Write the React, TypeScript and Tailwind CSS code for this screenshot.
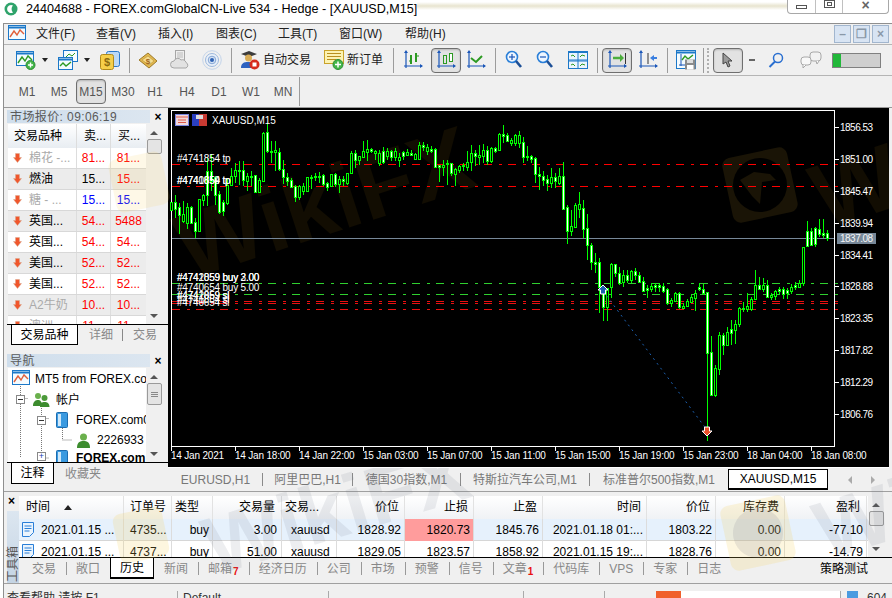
import * as React from "react";

type Candle = [number, number, number, number, number];

// hi, top, bottom, lo, fill (1 = white body) in 3x units from y=108
const upper: Candle[] = [
  [283,283,307,310,0],[260,283,303,330,1],[285,298,320,378,1],[278,318,340,345,0],[285,298,345,362,0],[295,298,345,345,1],
  [330,343,368,390,1],[272,274,368,368,0],[258,262,275,295,0],[150,190,262,295,1],[138,190,220,250,1],[205,208,260,290,1],
  [250,258,312,318,1],[275,283,310,325,1],[210,230,285,292,0],[180,205,230,235,0],[165,187,205,225,0],[160,186,190,230,0],
  [160,187,217,235,1],[195,205,218,250,0],[190,205,208,235,1],[200,202,252,255,1],[210,217,252,255,0],[72,74,218,222,0],
  [45,72,130,135,1],[100,128,130,165,1],[100,127,133,190,0],[120,133,183,190,1],[155,182,208,228,1],[195,208,220,235,1],
  [210,217,237,240,1],[230,234,268,282,1],[232,234,268,275,0],[225,235,250,262,0],[208,208,250,252,0],[200,208,210,242,0],
  [195,204,208,220,0],[192,204,206,225,0],[198,202,228,235,1],[222,226,238,248,1],[198,199,235,238,0],[195,199,228,238,1],
  [205,212,228,255,0],[205,212,220,235,1],[195,196,224,232,0],[128,135,196,198,0],[125,135,155,180,1],[143,145,156,170,0],
  [100,128,146,150,0],[95,124,132,160,0],[120,124,130,135,1],[125,128,135,155,0],[125,134,164,173,0],[118,128,163,168,1],
  [120,130,144,155,0],[125,128,146,160,1],[120,130,148,160,0],[135,146,155,178,0],[130,132,144,155,1],[122,132,140,145,0],
  [125,135,140,145,1],[135,138,153,157,0],[102,112,152,155,0],[102,112,116,130,1],[108,116,128,140,0],[115,124,128,135,1],
  [120,124,178,180,1],[170,172,176,222,1],[155,170,177,205,0],[155,165,166,230,1],[165,165,195,205,1],[180,183,198,235,0],
  [170,173,185,195,0],[165,170,175,190,1],[130,163,177,190,0],[110,136,163,190,0],[125,136,145,175,1],[110,141,146,170,0],
  [108,127,144,165,0],[115,127,158,170,1],[118,120,158,165,0],[118,121,128,135,1],[76,79,125,130,0],[52,78,84,105,1],
  [75,82,98,102,1],[90,97,105,115,0],[78,82,105,115,0],[70,82,105,120,0],
  [88,102,146,165,1],[115,144,148,160,1],[140,145,152,165,1],[148,150,197,225,1],[178,197,205,245,1],[190,205,215,235,1],
  [200,214,224,248,1],[180,208,224,240,0],[195,207,220,240,1],[180,205,225,232,0],[162,204,302,305,1],[290,298,368,408,1],
  [305,355,368,385,0],[285,291,356,358,0],[252,289,302,330,0],[275,300,362,390,1],[318,361,412,455,1],[405,411,463,485,1],
  [435,463,467,495,1],[450,463,538,614,1],
];

// same fields, 3x units from y=270
const lower: Candle[] = [
  [60,55,110,152,1],[55,55,110,152,0],[-20,-18,52,85,0],[-18,-18,10,20,1],[-10,10,40,45,1],[0,16,36,50,0],[0,15,30,40,1],
  [0,4,30,38,0],[-5,2,14,30,1],[5,14,36,40,1],[20,34,62,65,1],[45,55,60,85,1],[40,48,58,65,0],[40,46,50,65,1],[40,46,50,65,1],
  [40,48,62,70,1],[55,58,100,105,1],[85,90,99,112,0],[65,70,92,95,0],[65,68,112,118,1],[100,108,114,118,0],[88,92,108,112,0],
  [75,82,96,100,0],[60,70,84,122,0],[40,52,58,62,1],[42,58,68,75,1],[66,66,248,512,1],[198,246,374,374,1],[285,294,374,380,0],
  [185,196,296,315,0],[190,196,224,255,1],[170,186,224,225,0],[150,178,188,225,1],[150,163,180,222,0],[112,114,163,170,0],
  [95,114,118,125,1],[68,108,118,125,0],[80,86,118,122,0],[0,46,88,90,0],[20,46,56,60,1],[25,44,58,65,0],[30,46,80,85,1],
  [70,74,80,90,0],[60,64,78,90,0],[52,56,64,72,1],[52,58,72,88,1],[55,60,70,88,1],[42,50,62,72,0],[35,46,50,60,1],[30,38,50,55,0],
  [-68,-68,40,48,0],[-146,-116,-71,-68,1],[-126,-116,-76,-71,1],[-130,-126,-78,-70,1],[-153,-124,-109,-98,1],[-153,-111,-106,-96,1],
  [-121,-111,-96,-88,1],
];

const candles: Candle[] = [...upper, ...lower.map(([a, b, c, d, f]) => [a + 486, b + 486, c + 486, d + 486, f] as Candle)];
const py = (v: number) => 108 + Math.round(v / 3);

const prices = [
  ["1856.53", 127], ["1851.00", 159], ["1845.47", 191], ["1839.94", 223], ["1834.41", 255],
  ["1828.88", 286], ["1823.35", 318], ["1817.82", 350], ["1812.29", 382], ["1806.76", 414],
] as const;

const times = [
  "14 Jan 2021", "14 Jan 18:00", "14 Jan 22:00", "15 Jan 03:00", "15 Jan 07:00", "15 Jan 11:00",
  "15 Jan 15:00", "15 Jan 19:00", "15 Jan 23:00", "18 Jan 04:00", "18 Jan 08:00",
];

const levels = [
  [164, "#ff0000"], [186, "#ff0000"], [283, "#2fd02f"], [294, "#2fd02f"], [301, "#e81010"], [303, "#e81010"], [309, "#e81010"],
] as const;

// long and short dash of one 24px period along the level lines
const dashes = Array.from({ length: 28 }, (_, k) => 172 + k * 24).flatMap((x) => [[x, 8], [x + 15, 3]]);

const chartLabels = [
  ["#4741854 tp", 162], ["#4740654 tp", 184], ["#4741859 tp", 184], ["#4742059 buy 3.00", 281], ["#4741859 buy 2.00", 281],
  ["#4740654 buy 5.00", 291], ["#4741859 sl", 299], ["#4742059 sl", 299], ["#4741854 sl", 303], ["#4740654 sl", 306],
] as const;

const quotes = [
  ["棉花 -...", "81...", "81...", "text-[#aaaaaa]", "text-[#ff0000]", "text-[#ff0000]"],
  ["燃油", "15...", "15...", "text-black", "text-black", "text-[#ff0000]"],
  ["糖 - ...", "15...", "15...", "text-[#aaaaaa]", "text-[#0000ff]", "text-[#0000ff]"],
  ["英国...", "54...", "5488", "text-black", "text-[#ff0000]", "text-[#ff0000]"],
  ["英国...", "54...", "54...", "text-black", "text-[#ff0000]", "text-[#ff0000]"],
  ["美国...", "52...", "52...", "text-black", "text-[#ff0000]", "text-[#ff0000]"],
  ["美国...", "52...", "52...", "text-black", "text-[#ff0000]", "text-[#ff0000]"],
  ["A2牛奶", "10...", "10...", "text-[#aaaaaa]", "text-[#ff0000]", "text-[#ff0000]"],
  ["澳洲...", "11...", "11...", "text-[#aaaaaa]", "text-[#ff0000]", "text-[#ff0000]"],
];

const historyHeaders = ["时间", "订单号", "类型", "交易量", "交易...", "价位", "止损", "止盈", "时间", "价位", "库存费", "盈利"];
const historyRows = [
  ["2021.01.15 ...", "4735...", "buy", "3.00", "xauusd", "1828.92", "1820.73", "1845.76", "2021.01.18 01:...", "1803.22", "0.00", "-77.10"],
  ["2021.01.15 ...", "4737...", "buy", "51.00", "xauusd", "1829.05", "1823.57", "1858.92", "2021.01.15 19:...", "1828.76", "0.00", "-14.79"],
];
const headerAlign = ["text-left pl-[7px]", "text-left pl-[6px]", "text-left pl-[3px]", "text-right pr-[6px]", "text-left pl-[3px]", "text-right pr-[5px]", "text-right pr-[5px]", "text-right pr-[5px]", "text-right pr-[5px]", "text-right pr-[5px]", "text-right pr-[5px]", "text-right pr-[6px]"];
const cellAlign = ["text-left pl-[22px]", "text-left pl-[6px]", "text-right pr-[3px]", "text-right pr-[4px]", "text-left pl-[9px]", "text-right pr-[3px]", "text-right pr-[3px]", "text-right pr-[3px]", "text-right pr-[3px]", "text-right pr-[3px]", "text-right pr-[3px]", "text-right pr-[3px]"];

const chartTabs = [
  ["EURUSD,H1", "w-[94px]"], ["阿里巴巴,H1", "w-[90px]"], ["德国30指数,M1", "w-[108px]"], ["特斯拉汽车公司,M1", "w-[129px]"],
] as const;

const toolTabs: [string, string?][] = [
  ["交易"], ["敞口"], ["历史"], ["新闻"], ["邮箱", "7"], ["经济日历"], ["公司"], ["市场"], ["预警"], ["信号"], ["文章", "1"], ["代码库"], ["VPS"], ["专家"], ["日志"],
];

function Axes({ children }: { children?: React.ReactNode }) {
  return (
    <svg width="20" height="20" viewBox="0 0 20 20" className="shrink-0">
      <path d="M3 2v16M1 16h18" stroke="#1a56b8" strokeWidth="1.2" fill="none" />
      <path d="M3 0l2 3H1zM20 16l-3-2v4z" fill="#1a56b8" />
      {children}
    </svg>
  );
}

function ChartWindow({ plus, red }: { plus?: boolean; red?: boolean }) {
  return (
    <svg width="20" height="20" viewBox="0 0 20 20" className="shrink-0">
      <rect x="0.5" y="1.5" width="17" height="14" fill="#f4fbff" stroke="#1c78c8" />
      <path d="M1 3.5h16" stroke="#1c78c8" strokeWidth="2" />
      <path d="M2 13l4-6 3 4 3-5 4 4" stroke={red ? "#e0603c" : "#2c9a22"} strokeWidth="1.4" fill="none" />
      {plus && (
        <>
          <circle cx="14.5" cy="15" r="4.5" fill="#43b649" stroke="#2d8b34" />
          <path d="M14.5 12.5v5M12 15h5" stroke="#fff" strokeWidth="1.4" />
        </>
      )}
    </svg>
  );
}

function Profiles() {
  return (
    <svg width="20" height="20" viewBox="0 0 20 20" className="shrink-0">
      <rect x="5.5" y="0.5" width="14" height="11" fill="#f4fbff" stroke="#1c78c8" />
      <path d="M8 7l3-3 3 2 3-3" stroke="#2c9a22" fill="none" />
      <rect x="0.5" y="7.5" width="14" height="12" fill="#f4fbff" stroke="#1c78c8" />
      <path d="M1 9.5h13" stroke="#1c78c8" strokeWidth="2" />
      <path d="M2 16l3-3 3 3 5-4" stroke="#2c9a22" strokeWidth="1.4" fill="none" />
    </svg>
  );
}

function Dollar() {
  return (
    <svg width="20" height="20" viewBox="0 0 20 20" className="shrink-0">
      <rect x="6.5" y="1.5" width="13" height="15" rx="2" fill="#bcd9f5" stroke="#2a78c8" />
      <rect x="0.5" y="4.5" width="13" height="15" rx="2" fill="#f6cf4a" stroke="#b08a1a" />
      <text x="7" y="16" textAnchor="middle" fontSize="11" fontWeight="700" fill="#8a6a10">$</text>
    </svg>
  );
}

function GoldBook() {
  return (
    <svg width="20" height="20" viewBox="0 0 20 20" className="shrink-0">
      <path d="M1 10L10 3l9 8-8 7z" fill="#e2b84e" stroke="#9d7a2a" />
      <path d="M4 10l6-4 6 5-5 4z" fill="#f6dd8e" stroke="#b8923a" strokeWidth="0.6" />
      <text x="10" y="14" textAnchor="middle" fontSize="8" fontWeight="700" fill="#a0641a">$</text>
    </svg>
  );
}

function CloudDoc() {
  return (
    <svg width="20" height="20" viewBox="0 0 20 20" className="shrink-0">
      <rect x="5.5" y="0.5" width="9" height="11" fill="#eeeeee" stroke="#a6a6a6" />
      <path d="M7 3h6M7 5h6M7 7h6" stroke="#bbbbbb" />
      <path d="M4 18a3.5 3.5 0 0 1 0-7 4 4 0 0 1 7-1 4 4 0 0 1 5 2.500 3 3 0 0 1 0 5.500z" fill="#e2e2e2" stroke="#a6a6a6" />
    </svg>
  );
}

function Signal() {
  return (
    <svg width="20" height="20" viewBox="0 0 20 20" className="shrink-0">
      <circle cx="10" cy="10" r="9.300" fill="none" stroke="#c3d4ea" />
      <circle cx="10" cy="10" r="6.500" fill="#e8f0fa" stroke="#9db8dc" />
      <circle cx="10" cy="10" r="3.800" fill="#d3e1f4" stroke="#86a6d4" />
      <circle cx="10" cy="10" r="2" fill="#2f62b4" />
    </svg>
  );
}

function Hat() {
  return (
    <svg width="20" height="20" viewBox="0 0 20 20" className="shrink-0">
      <path d="M1 4l8-3 8 3-8 3z" fill="#3c3c3c" />
      <circle cx="8.500" cy="8" r="3.500" fill="#d9ad57" />
      <path d="M1 18c0-5 3-6 7-6s5 2 5 6z" fill="#2d62c0" />
      <circle cx="14.500" cy="14.500" r="5" fill="#d62a1c" />
      <rect x="12.500" y="12.500" width="4" height="4" fill="#fff" />
    </svg>
  );
}

function NewOrder() {
  return (
    <svg width="20" height="20" viewBox="0 0 20 20" className="shrink-0">
      <rect x="0.5" y="0.5" width="19" height="13" fill="#fdf3b2" stroke="#c9a22a" />
      <path d="M3 3.500h14M3 6.500h14M3 9.500h9" stroke="#b98f20" />
      <circle cx="14" cy="14.500" r="5" fill="#43b649" stroke="#2d8b34" />
      <path d="M14 11.500v6M11 14.500h6" stroke="#fff" strokeWidth="1.5" />
    </svg>
  );
}

function Magnifier({ minus }: { minus?: boolean }) {
  return (
    <svg width="20" height="20" viewBox="0 0 20 20" className="shrink-0">
      <circle cx="7" cy="7" r="5.500" fill="#eef6ff" stroke="#2a7fd8" strokeWidth="1.600" />
      <path d="M4 7h6" stroke="#1a56b8" strokeWidth="1.200" />
      {!minus && <path d="M7 4v6" stroke="#1a56b8" strokeWidth="1.200" />}
      <path d="M11 11l5 6" stroke="#1c4f96" strokeWidth="2.600" />
    </svg>
  );
}

function Tile() {
  return (
    <svg width="20" height="20" viewBox="0 0 20 20" className="shrink-0">
      <rect x="0.5" y="1.500" width="19" height="17" fill="#eaf4fd" stroke="#1c78c8" />
      <path d="M10 2v16M1 10h18" stroke="#1c78c8" />
      <path d="M1 2.500h18M1 11h18" stroke="#1c78c8" />
      <path d="M3 6l2-1 2 2M12 7l2-2 3 1M3 15l2-1 2 2M12 16l2-2 3 1" stroke="#2c9a22" fill="none" />
    </svg>
  );
}

function SaveChart() {
  return (
    <svg width="20" height="20" viewBox="0 0 20 20" className="shrink-0">
      <rect x="0.5" y="0.5" width="19" height="18" fill="#f4fbff" stroke="#1c78c8" />
      <path d="M1 2.500h18" stroke="#1c78c8" strokeWidth="2" />
      <path d="M5 4v12M3 15h6" stroke="#1a56b8" />
      <path d="M6 10l3-4 3 3 5-4" stroke="#2c9a22" strokeWidth="1.400" fill="none" />
      <rect x="9" y="9.500" width="10.500" height="10" fill="#8b8b8b" />
      <rect x="11" y="9.500" width="6" height="3.500" fill="#dddddd" />
      <rect x="11" y="15" width="6.500" height="4.500" fill="#ffffff" />
    </svg>
  );
}

function Caret({ className }: { className?: string }) {
  return <div className={`h-0 w-0 border-x-[3.5px] border-t-[4px] border-x-transparent border-t-[#222222] ${className ?? ""}`} />;
}

function Sep({ className }: { className?: string }) {
  return <div className={`h-[25px] w-px shrink-0 bg-[#9c9c9c] ${className ?? ""}`} />;
}

function Active({ children, className }: { children: React.ReactNode; className?: string }) {
  return (
    <div className={`flex h-[25px] w-[30px] shrink-0 items-center justify-center rounded-[4px] border border-[#6f6f6f] bg-[#e2e2e2] shadow-[inset_0_1px_2px_rgba(0,0,0,0.2)] ${className ?? ""}`}>
      {children}
    </div>
  );
}

function DownArrow() {
  return (
    <svg width="9" height="10" viewBox="0 0 9 10" className="shrink-0">
      <path d="M2.500 0.500h4v4h2L4.500 9.500 0.500 4.500h2z" fill="#f0562c" stroke="#d8a88e" strokeWidth="0.500" />
    </svg>
  );
}

function Scrollbar({ thumb, grip }: { thumb: string; grip?: boolean }) {
  return (
    <div className="flex h-full w-[16px] shrink-0 flex-col items-center bg-[#f0f0f0] pt-[7px]">
      <div className="h-0 w-0 border-x-[4px] border-b-[4px] border-x-transparent border-b-[#555555]" />
      <div className={`mt-[4px] flex w-[15px] shrink-0 flex-col items-center justify-center gap-px rounded-[2px] border border-[#9a9a9a] bg-[#e4e4e4] ${thumb}`}>
        {grip && (
          <>
            <div className="h-px w-[7px] bg-[#888888]" />
            <div className="h-px w-[7px] bg-[#888888]" />
            <div className="h-px w-[7px] bg-[#888888]" />
          </>
        )}
      </div>
      <div className="mt-auto mb-[6px] h-0 w-0 border-x-[4px] border-t-[4px] border-x-transparent border-t-[#555555]" />
    </div>
  );
}

function PanelTitle({ text }: { text: string }) {
  return (
    <div className="ml-[3px] flex h-[13px] shrink-0 items-center">
      <div className="flex h-full w-[143px] items-center bg-gradient-to-r from-[#cfdeec] to-[#dce6f0] pl-[3px] text-[12px] leading-none tracking-[0.4px] text-[#5a5a5a]">{text}</div>
      <div className="w-[16px] text-center text-[12px] leading-none font-bold text-black">×</div>
    </div>
  );
}

function TreeServer() {
  return (
    <svg width="12" height="16" viewBox="0 0 12 16" className="ml-[10px] shrink-0">
      <rect x="0.500" y="0.500" width="11" height="15" rx="1" fill="#3b9ae0" stroke="#1c6cb0" />
      <rect x="2" y="2" width="3" height="12" fill="#cfe8fa" />
    </svg>
  );
}

function Chart() {
  return (
    <svg viewBox="168 108 721 359" width="721" height="359" className="block bg-black" shapeRendering="crispEdges">
      <g fill="#120d02" shapeRendering="auto">
        <text x="160" y="240" fontSize="92" fontWeight="700" transform="rotate(-18 300 170)">WikiFX</text>
        <text x="806" y="225" fontSize="92" fontWeight="700" transform="rotate(-18 830 170)">W</text>
        <rect x="727" y="152" width="66" height="66" rx="8" fill="#1a1406" transform="rotate(-12 760 185)" />
      </g>
      <g shapeRendering="auto">
        <circle cx="760" cy="185" r="27" fill="#000000" />
        <path d="M740 180l14-8 16 2 6 6-14 2-2 22-8-8z" fill="#1a1406" />
      </g>
      <rect x="171.500" y="110.500" width="663" height="336" fill="none" stroke="#ffffff" />
      {levels.map(([y, color]) =>
        dashes.map(([x, w]) => <rect key={`${y}-${x}`} x={x} y={y} width={w} height="1" fill={color} />),
      )}
      <rect x="172" y="238" width="662" height="1" fill="#778899" />
      {candles.map(([hi, top, bot, lo, fill], i) => {
        const cx = 171 + i * 4;
        const t = py(top);
        const b = py(bot);
        return (
          <React.Fragment key={i}>
            <rect x={cx} y={py(hi)} width="1" height={Math.max(1, py(lo) - py(hi))} fill="#00ff00" />
            <rect x={cx - 1} y={t} width="3" height={Math.max(2, b - t + 1)} fill="#00ff00" />
            {b - t > 1 && <rect x={cx} y={t + 1} width="1" height={b - t - 1} fill={fill ? "#ffffff" : "#000000"} />}
          </React.Fragment>
        );
      })}
      <line x1="603" y1="291" x2="707" y2="430" stroke="#1c5fae" strokeDasharray="2 4" shapeRendering="auto" />
      <path d="M603 285l5 5h-2.500v4h-5v-4H598z" fill="#1c5fae" stroke="#ffffff" shapeRendering="auto" />
      <path d="M707 436l-5-5h2.500v-4h5v4h2.500z" fill="#e8502a" stroke="#ffffff" shapeRendering="auto" />
      <g shapeRendering="auto">
        <rect x="175.500" y="114.500" width="13" height="11" fill="#f2d8d8" stroke="#7a86e0" />
        <path d="M176 117h12M178 120h8M178 122.500h8" stroke="#e05a4a" />
        <rect x="192" y="114" width="7" height="12" fill="#2a3fc0" />
        <rect x="199" y="114" width="8" height="12" fill="#c83a32" />
        <rect x="196" y="115" width="7" height="4" fill="#dddddd" />
      </g>
      <g fill="#ffffff" fontSize="10" shapeRendering="auto">
        <text x="212" y="124">XAUUSD,M15</text>
        {chartLabels.map(([t, y], i) => (
          <text key={i} x="177" y={y} letterSpacing="-0.200">{t}</text>
        ))}
        {prices.map(([t, y]) => (
          <text key={t} x="840" y={y + 3.500} letterSpacing="-0.500">{t}</text>
        ))}
        {times.map((t, i) => (
          <text key={t} x={171 + i * 64} y="459" letterSpacing="-0.200">{t}</text>
        ))}
      </g>
      {prices.map(([t, y]) => (
        <rect key={t} x="835" y={y} width="4" height="1" fill="#ffffff" />
      ))}
      {times.map((t, i) => (
        <rect key={t} x={171 + i * 64} y="447" width="1" height="4" fill="#ffffff" />
      ))}
      <rect x="837" y="233" width="39" height="11" fill="#778899" />
      <text x="840" y="242" fontSize="10" letterSpacing="-0.500" fill="#f4f4f4" shapeRendering="auto">1837.08</text>
    </svg>
  );
}

function MarketWatch() {
  return (
    <div className="flex h-[243px] shrink-0 flex-col pt-[2px]">
      <PanelTitle text="市场报价: 09:06:19" />
      <div className="ml-[4px] flex h-[201px] shrink-0 overflow-hidden pt-px">
        <div className="w-[138px] shrink-0 bg-white">
          <div className="grid h-[24px] grid-cols-[69px_34px_35px] items-center bg-gradient-to-b from-white to-[#e8edf2] text-[12px] text-black">
            <div className="h-full border-r border-[#dddddd] pl-[6px] leading-[24px]">交易品种</div>
            <div className="h-full border-r border-[#dddddd] pl-[7px] leading-[24px]">卖...</div>
            <div className="pl-[7px]">买...</div>
          </div>
          {quotes.map(([name, bid, ask, nc, bc, ac], i) => (
            <div key={i} className={`grid h-[21px] grid-cols-[69px_34px_35px] items-center border-b border-[#d8d8d8] text-[12px] leading-none ${i % 2 ? "bg-[#ececec]" : "bg-white"}`}>
              <div className="flex h-full items-center border-r border-[#dddddd] pl-[5px]">
                <DownArrow />
                <span className={`ml-[7px] whitespace-nowrap ${nc}`}>{name}</span>
              </div>
              <div className={`flex h-full items-center justify-center border-r border-[#dddddd] ${bc}`}>{bid}</div>
              <div className={`text-center ${ac}`}>{ask}</div>
            </div>
          ))}
        </div>
        <Scrollbar thumb="h-[15px]" />
      </div>
      <div className="ml-[3px] flex h-[21px] shrink-0 items-stretch border-t border-black text-[12px]">
        <div className="ml-[4px] flex w-[67px] items-center justify-center border-x border-b border-black bg-white text-black">交易品种</div>
        <div className="flex items-center pl-[11px] text-[#888888]">详细</div>
        <div className="ml-[9px] my-[4px] w-px bg-[#888888]" />
        <div className="flex items-center pl-[10px] text-[#888888]">交易</div>
      </div>
    </div>
  );
}

function Navigator() {
  return (
    <div className="mt-[3px] flex flex-col">
      <PanelTitle text="导航" />
      <div className="relative ml-[4px] flex h-[95px] shrink-0 overflow-hidden pt-px">
        <div className="relative w-[138px] shrink-0 overflow-hidden bg-white pt-px text-[12px] leading-none text-black">
          <svg width="138" height="95" className="absolute top-0 left-0" fill="none" stroke="#777777" strokeDasharray="1 1">
            <path d="M12.500 18v72M12.500 30.500h8M33.500 38v52M33.500 50.500h8M54.500 58v14h10M33.500 90h8" />
          </svg>
          <div className="relative flex h-[20px] items-center pl-[4px]">
            <ChartWindow red />
            <span className="ml-[3px] whitespace-nowrap">MT5 from FOREX.co</span>
          </div>
          <div className="relative flex h-[21px] items-center pl-[8px]">
            <div className="flex h-[9px] w-[9px] shrink-0 items-center justify-center border border-[#888888] bg-white"><div className="h-px w-[5px] bg-[#333333]" /></div>
            <svg width="17" height="17" viewBox="0 0 17 17" className="ml-[8px] shrink-0">
              <circle cx="5" cy="5" r="3" fill="#6ab04c" /><circle cx="11.500" cy="7" r="3" fill="#4c9a3a" />
              <path d="M0 15c0-5 3-6 5-6s4 1 4 6zM7 16c0-4 2-5 4.500-5s5 1 5 5z" fill="#3c8c2e" />
            </svg>
            <span className="ml-[6px]">帐户</span>
          </div>
          <div className="relative flex h-[20px] items-center pl-[29px]">
            <div className="flex h-[9px] w-[9px] shrink-0 items-center justify-center border border-[#888888] bg-white"><div className="h-px w-[5px] bg-[#333333]" /></div>
            <TreeServer />
            <span className="ml-[8px] whitespace-nowrap">FOREX.com0</span>
          </div>
          <div className="relative flex h-[20px] items-center pl-[69px]">
            <svg width="13" height="16" viewBox="0 0 13 16" className="shrink-0">
              <circle cx="6.500" cy="5" r="3.500" fill="#6ab04c" /><path d="M0 16c0-6 3-7 6.500-7s6.500 1 6.500 7z" fill="#3c8c2e" />
            </svg>
            <span className="ml-[7px]">2226933</span>
          </div>
          <div className="relative flex h-[14px] items-start pl-[29px]">
            <div className="mt-[2px] flex h-[9px] w-[9px] shrink-0 items-center justify-center border border-[#888888] bg-white text-[9px] leading-none text-[#1a3fb0]">+</div>
            <TreeServer />
            <span className="mt-[2px] ml-[8px] whitespace-nowrap font-bold">FOREX.com</span>
          </div>
        </div>
        <Scrollbar thumb="h-[22px]" grip />
      </div>
      <div className="ml-[3px] flex h-[22px] shrink-0 items-stretch border-t border-black text-[12px]">
        <div className="ml-[4px] flex w-[43px] items-center justify-center border-x border-b border-black bg-white text-black">注释</div>
        <div className="flex items-center pl-[11px] text-[#888888]">收藏夹</div>
      </div>
    </div>
  );
}

function ChartTabs() {
  return (
    <div className="flex h-[24px] items-stretch border-t border-white pl-px text-[12px] text-[#777777]">
      {chartTabs.map(([t, w]) => (
        <div key={t} className={`my-[5px] flex items-center justify-center border-r border-[#8a8a8a] whitespace-nowrap ${w}`}>{t}</div>
      ))}
      <div className="flex w-[138px] items-center justify-center whitespace-nowrap">标准普尔500指数,M1</div>
      <div className="mt-px mb-[1px] flex w-[100px] items-center justify-center border-x border-t border-b-2 border-black bg-white text-black">XAUUSD,M15</div>
      <div className="ml-[20px] flex items-center gap-[19px]">
        <div className="h-0 w-0 border-y-[4px] border-r-[4px] border-y-transparent border-r-[#aaaaaa]" />
        <div className="h-0 w-0 border-y-[4px] border-l-[4px] border-y-transparent border-l-[#aaaaaa]" />
      </div>
    </div>
  );
}

function Toolbox() {
  return (
    <div className="flex h-[92px] shrink-0 border-t border-[#a0a0a0]">
      <div className="flex w-[15px] shrink-0 flex-col items-center pt-[2px]">
        <div className="text-[12px] leading-[14px] font-bold text-black">×</div>
        <div className="mt-[3px] ml-[3px] flex h-[73px] w-[12px] shrink-0 items-start justify-center bg-gradient-to-b from-[#dce6f0] to-[#c4d4e4]">
          <span className="mt-[35px] rotate-180 text-[12px] leading-[12px] whitespace-nowrap text-[#555555] [text-orientation:sideways] [writing-mode:vertical-rl]">工具箱</span>
        </div>
      </div>
      <div className="flex min-w-0 flex-1 flex-col pt-[4px]">
        <div className="flex h-[61px] shrink-0 overflow-hidden">
          <div className="w-[849px] shrink-0 bg-white text-[12px] text-black">
            <div className="grid h-[23px] grid-cols-[105px_48px_41px_69px_55px_68px_69px_69px_104px_69px_69px_82px] items-center bg-gradient-to-b from-white to-[#f0f2f5]">
              {historyHeaders.map((h, i) => (
                <div key={i} className={`relative h-full border-r border-[#e2e2e2] leading-[23px] whitespace-nowrap ${headerAlign[i]}`}>
                  {h}
                  {i === 0 && <div className="absolute top-[9px] left-[45px] h-0 w-0 border-x-[4px] border-b-[5px] border-x-transparent border-b-[#222222]" />}
                </div>
              ))}
            </div>
            {historyRows.map((r, ri) => (
              <div key={ri} className={`grid h-[22px] grid-cols-[105px_48px_41px_69px_55px_68px_69px_69px_104px_69px_69px_82px] items-center border-b border-[#d6d6d6] ${ri === 0 ? "bg-[#e6f1fc]" : "bg-white"}`}>
                {r.map((c, i) => (
                  <div key={i} className={`relative h-full border-r border-[#dcdcdc] leading-[22px] whitespace-nowrap ${cellAlign[i]} ${ri === 0 && i === 6 ? "bg-[#ff9c9c]" : ""}`}>
                    {i === 0 && (
                      <svg width="12" height="15" viewBox="0 0 12 15" className="absolute top-[3px] left-[3px]">
                        <path d="M0.500 0.500h11v10l-4 4h-7z" fill="#eaf4fd" stroke="#2a7fd8" />
                        <path d="M2.500 4h7M2.500 6.500h7M2.500 9h5" stroke="#2a7fd8" />
                      </svg>
                    )}
                    {c}
                  </div>
                ))}
              </div>
            ))}
          </div>
          <Scrollbar thumb="h-[15px]" />
        </div>
        <div className="flex h-[22px] shrink-0 items-stretch border-t border-black pl-[3px] text-[12px] text-[#888888]">
          {toolTabs.map(([t, n]) =>
            t === "历史" ? (
              <div key={t} className="flex w-[44px] items-center justify-center border-x border-b-2 border-black bg-white text-black">{t}</div>
            ) : t === "交易" || t === "新闻" ? (
              <div key={t} className="my-[4px] flex items-center px-[10px] whitespace-nowrap">{t}</div>
            ) : (
              <div key={t} className="my-[4px] flex items-center border-l border-[#999999] pr-[10px] pl-[9px] whitespace-nowrap">
                {t}
                {n && <span className="mt-[6px] ml-[1px] text-[10px] leading-none font-bold text-[#e81010]">{n}</span>}
              </div>
            ),
          )}
          <div className="ml-auto mr-[24px] flex items-center text-black">策略测试</div>
        </div>
      </div>
    </div>
  );
}

function Watermarks() {
  return (
    <div className="pointer-events-none absolute top-[468px] left-0 h-[115px] w-[892px] overflow-hidden font-bold text-[#6f7486]/12">
      <div className="absolute top-[0px] left-[200px] rotate-[-17deg] text-[82px] leading-none">WikiFX</div>
      <div className="absolute top-[10px] left-[815px] rotate-[-17deg] text-[82px] leading-none">Wi</div>
      <div className="absolute top-[42px] left-[116px] h-[50px] w-[50px] rotate-[-12deg] rounded-[8px] bg-[#f5d060]/20" />
      <div className="absolute top-[32px] left-[725px] flex h-[66px] w-[66px] rotate-[-12deg] items-center justify-center rounded-[8px] bg-[#f5d060]/20">
        <div className="h-[50px] w-[50px] rounded-full bg-[#6f7486]/15" />
      </div>
    </div>
  );
}

export default function App() {
  return (
    <div className="relative flex h-[598px] w-[892px] flex-col overflow-hidden bg-white font-['Liberation_Sans','Noto_Sans_CJK_SC',sans-serif]">
      <div className="flex h-[23px] shrink-0 items-start">
        <svg width="14" height="14" viewBox="0 0 14 14" className="mt-[2px] ml-[4px] shrink-0">
          <circle cx="7" cy="7" r="6.500" fill="#2fa36b" />
          <path d="M9 3.500a4 4 0 1 0 0 7 5 5 0 0 1 0-7z" fill="#ffffff" />
        </svg>
        <div className="mt-[1px] ml-[8px] text-[12.6px] leading-[16px] whitespace-nowrap text-black">24404688 - FOREX.comGlobalCN-Live 534 - Hedge - [XAUUSD,M15]</div>
        <div className="mt-[2px] h-[8px] flex-1 bg-gradient-to-b from-white via-[#e8e4cf] to-white" />
        <div className="mr-[3px] flex h-[14px] w-[102px] shrink-0 items-stretch rounded-b-[4px] border border-t-0 border-[#a8a8a8] bg-white">
          <div className="flex w-[28px] items-center justify-center border-r border-[#c0c0c0]"><div className="h-[4px] w-[11px] border border-[#555555]" /></div>
          <div className="flex w-[27px] items-start justify-center border-r border-[#c0c0c0]"><div className="flex h-[8px] w-[11px] items-center justify-center border border-[#555555]"><div className="h-[4px] w-[5px] border border-[#555555]" /></div></div>
          <div className="flex flex-1 items-start justify-center text-[14px] leading-[10px] font-bold text-[#666666]">×</div>
        </div>
      </div>

      <div className="ml-[3px] flex min-h-0 flex-1 flex-col border-t border-l border-[#8f8f8f] bg-[#f0f0f0]">
        <div className="flex h-[21px] shrink-0 items-center border-b border-[#b5b5b5] text-[12px] text-[#222222]">
          <div className="ml-[4px] shrink-0"><ChartWindow red /></div>
          <div className="ml-[8px] w-[60px]">文件(F)</div>
          <div className="w-[62px]">查看(V)</div>
          <div className="w-[58px]">插入(I)</div>
          <div className="w-[62px]">图表(C)</div>
          <div className="w-[61px]">工具(T)</div>
          <div className="w-[66px]">窗口(W)</div>
          <div>帮助(H)</div>
          <div className="mr-[3px] ml-auto flex gap-[2px]">
            {["–", "❐", "×"].map((s) => (
              <div key={s} className="flex h-[18px] w-[17px] items-center justify-center border border-[#a2b6ce] bg-[#d8e4f3] text-[12px] leading-none font-bold text-[#8a98a8]">{s}</div>
            ))}
          </div>
        </div>

        <div className="flex h-[31px] shrink-0 items-center border-b border-[#b5b5b5] text-[12px] text-[#222222]">
          <div className="ml-[12px]"><ChartWindow plus /></div>
          <Caret className="ml-[6px]" />
          <div className="ml-[10px]"><Profiles /></div>
          <Caret className="ml-[6px]" />
          <div className="ml-[10px]"><Dollar /></div>
          <Sep className="ml-[9px]" />
          <div className="ml-[8px]"><GoldBook /></div>
          <div className="ml-[12px]"><CloudDoc /></div>
          <div className="ml-[12px]"><Signal /></div>
          <Sep className="ml-[9px]" />
          <div className="ml-[8px]"><Hat /></div>
          <div className="ml-[3px] w-[48px] whitespace-nowrap">自动交易</div>
          <div className="ml-[13px]"><NewOrder /></div>
          <div className="ml-[3px] w-[36px] whitespace-nowrap">新订单</div>
          <Sep className="ml-[10px]" />
          <div className="ml-[9px]">
            <Axes><path d="M8 5v9M13 3v9" stroke="#2c9a22" strokeWidth="2" /><path d="M6 11h2M13 6h3" stroke="#2c9a22" /></Axes>
          </div>
          <Active className="ml-[8px]">
            <Axes><rect x="7.500" y="5.500" width="3" height="8" fill="none" stroke="#2c9a22" /><rect x="13.500" y="3.500" width="3" height="8" fill="#fff" stroke="#2c9a22" /></Axes>
          </Active>
          <div className="ml-[5px]">
            <Axes><path d="M5 8l5 4 6-6" stroke="#2c9a22" strokeWidth="2" fill="none" /></Axes>
          </div>
          <Sep className="ml-[9px]" />
          <div className="ml-[9px]"><Magnifier /></div>
          <div className="ml-[11px]"><Magnifier minus /></div>
          <div className="ml-[12px]"><Tile /></div>
          <Sep className="ml-[9px]" />
          <Active className="ml-[4px]">
            <Axes><path d="M6 8h8" stroke="#4cae3c" strokeWidth="2.500" /><path d="M13 4l4 4-4 4z" fill="#4cae3c" /><path d="M18.500 3v11" stroke="#333" /></Axes>
          </Active>
          <div className="ml-[6px]">
            <Axes><path d="M10 3v11" stroke="#333" /><path d="M12 8l4-3v6z" fill="#3a7fe0" /><path d="M15 8h4" stroke="#3a7fe0" strokeWidth="2" /></Axes>
          </div>
          <Sep className="ml-[9px]" />
          <div className="ml-[8px]"><SaveChart /></div>
          <Sep className="ml-[7px]" />
          <div className="ml-[3px] h-[25px] w-[2px] border-l-2 border-dotted border-[#b0b0b0]" />
          <Active className="ml-[4px]">
            <svg width="12" height="16" viewBox="0 0 12 16"><path d="M1 1v11l3-2 2 5 2-1-2-5h4z" fill="#9a9a9a" stroke="#444444" /></svg>
          </Active>
          <div className="ml-[6px] h-[2px] w-[6px] bg-[#666666]" />
          <svg width="16" height="16" viewBox="0 0 16 16" className="ml-[13px]">
            <circle cx="10" cy="6" r="4.500" fill="none" stroke="#2a6fd0" strokeWidth="1.500" />
            <path d="M7 9.500L1.500 15" stroke="#2a6fd0" strokeWidth="2" />
          </svg>
          <svg width="22" height="18" viewBox="0 0 22 18" className="ml-[16px]">
            <rect x="10" y="1" width="11" height="9" rx="3" fill="#f2f2f2" stroke="#a8a8a8" />
            <rect x="1" y="6" width="10" height="8" rx="3" fill="#f8f8f8" stroke="#a8a8a8" />
            <path d="M3 14l0 3 3-3M16 10l1 3 2-3" fill="#ffffff" stroke="#a8a8a8" />
          </svg>
          <div className="ml-[10px] h-[15px] w-[49px] border border-[#808080] bg-[#cfcfcf]">
            <div className="h-full w-[8px] bg-[#22b83a]" />
          </div>
        </div>

        <div className="flex h-[31px] shrink-0 items-center pl-[7px] text-[12px] text-[#555555]">
          {["M1", "M5", "M15", "M30", "H1", "H4", "D1", "W1", "MN"].map((m) => (
            <div key={m} className="flex w-[32px] items-center justify-center">
              {m === "M15" ? <Active className="h-[25px]">{m}</Active> : m}
            </div>
          ))}
          <Sep className="h-[29px]" />
        </div>

        <div className="flex h-[384px] shrink-0 border-t border-[#999999]">
          <div className="w-[164px] shrink-0">
            <MarketWatch />
            <Navigator />
          </div>
          <div className="min-w-0 flex-1 overflow-hidden pr-[3px]">
            <Chart />
            <ChartTabs />
          </div>
        </div>

        <Toolbox />

        <div className="flex min-h-0 flex-1 items-start border-t border-[#a0a0a0] pt-[7px] text-[12px] leading-[14px] text-[#333333]">
          <div className="w-[174px] border-r border-[#aaaaaa] pl-[3px] whitespace-nowrap">查看帮助 请按 F1</div>
          <div className="w-[151px] border-r border-[#aaaaaa] pl-[5px]">Default</div>
          <div className="h-[14px] w-[195px] border-r border-[#aaaaaa]" />
          <div className="h-[14px] w-[81px] border-r border-[#aaaaaa]" />
          <div className="h-[14px] w-[51px]" />
          <div className="h-[14px] w-[25px] bg-[#f0602c]" />
          <div className="h-[14px] w-[160px] border-r border-[#aaaaaa] bg-white" />
          <div className="ml-[6px] h-[14px] w-[11px] bg-[#4a9be0]" />
          <div className="ml-[9px]">604</div>
        </div>
      </div>

      <Watermarks />
      <div className="pointer-events-none absolute top-[155px] left-[112px] h-[54px] w-[54px] rotate-[-12deg] rounded-[8px] bg-[#f5d060]/15" />
    </div>
  );
}
